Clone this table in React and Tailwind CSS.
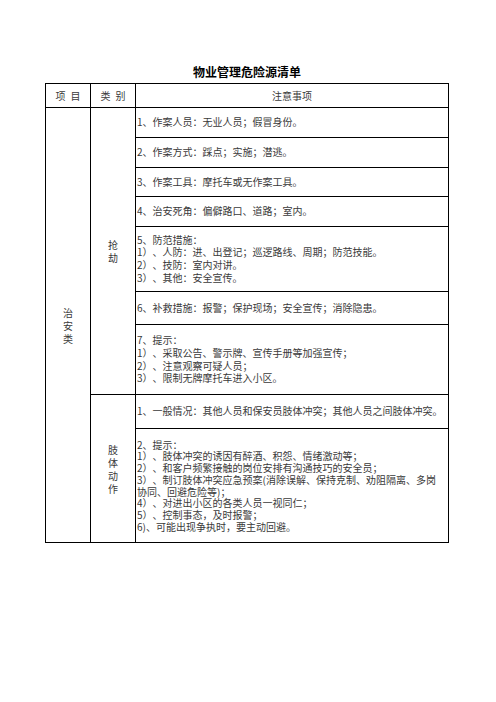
import React from "react";

const robbery = [
  { h: "h-[30px]", lines: ["1、作案人员：无业人员；假冒身份。"] },
  { h: "h-[30px]", lines: ["2、作案方式：踩点；实施；潜逃。"] },
  { h: "h-[29px]", lines: ["3、作案工具：摩托车或无作案工具。"] },
  { h: "h-[30px]", lines: ["4、治安死角：偏僻路口、道路；室内。"] },
  {
    h: "h-[65px]",
    lines: [
      "5、防范措施：",
      "1）、人防：进、出登记；巡逻路线、周期；防范技能。",
      "2）、技防：室内对讲。",
      "3）、其他：安全宣传。",
    ],
  },
  { h: "h-[33px]", lines: ["6、补救措施：报警；保护现场；安全宣传；消除隐患。"] },
  {
    h: "h-[70px]",
    lines: [
      "7、提示：",
      "1）、采取公告、警示牌、宣传手册等加强宣传；",
      "2）、注意观察可疑人员；",
      "3）、限制无牌摩托车进入小区。",
    ],
  },
];

const fight = [
  { h: "h-[34px]", lines: ["1、一般情况：其他人员和保安员肢体冲突；其他人员之间肢体冲突。"] },
  {
    h: "h-[114px]",
    tight: true,
    lines: [
      "2、提示：",
      "1）、肢体冲突的诱因有醉酒、积怨、情绪激动等；",
      "2）、和客户频繁接触的岗位安排有沟通技巧的安全员；",
      "3）、制订肢体冲突应急预案(消除误解、保持克制、劝阻隔离、多岗",
      "协同、回避危险等)；",
      "4）、对进出小区的各类人员一视同仁；",
      "5）、控制事态，及时报警；",
      "6)、可能出现争执时，要主动回避。",
    ],
  },
];

function Rows({ rows }) {
  return (
    <div className="flex flex-col">
      {rows.map((r, i) => (
        <div
          key={i}
          className={`${r.h} border-r border-b border-black flex flex-col justify-center pl-[1px] ${
            r.tight ? "leading-[11.7px]" : "leading-[12.6px]"
          }`}
        >
          {r.lines.map((l, j) => (
            <div key={j} className="whitespace-nowrap">
              {l}
            </div>
          ))}
        </div>
      ))}
    </div>
  );
}

function Vertical({ text }) {
  return (
    <div className="flex flex-col items-center leading-[13px]">
      {text.split("").map((c, i) => (
        <span key={i}>{c}</span>
      ))}
    </div>
  );
}

export default function App() {
  return (
    <div
      className="min-h-screen bg-white text-[#3a3a3a] text-[10px] [text-spacing-trim:space-all]"
      style={{ fontFamily: '"Noto Sans CJK SC", "Liberation Sans", sans-serif' }}
    >
      <div className="pl-[45px] pt-[64px]">
        <div className="w-[404px]">
          <div className="h-[19px] text-center text-[12px] font-bold leading-[16px] text-black">
            物业管理危险源清单
          </div>
          <div className="border-l border-t border-black">
            <div className="flex h-[24px]">
              <div className="w-[45px] border-r border-b border-black flex items-center justify-center">
                <span>项</span>
                <span className="ml-[5px]">目</span>
              </div>
              <div className="w-[45px] border-r border-b border-black flex items-center justify-center">
                <span>类</span>
                <span className="ml-[5px]">别</span>
              </div>
              <div className="w-[313px] border-r border-b border-black flex items-center justify-center">
                注意事项
              </div>
            </div>
            <div className="flex">
              <div className="w-[45px] border-r border-b border-black flex items-center justify-center">
                <Vertical text="治安类" />
              </div>
              <div className="flex flex-col">
                <div className="flex">
                  <div className="w-[45px] border-r border-b border-black flex items-center justify-center">
                    <Vertical text="抢劫" />
                  </div>
                  <div className="w-[313px]">
                    <Rows rows={robbery} />
                  </div>
                </div>
                <div className="flex">
                  <div className="w-[45px] border-r border-b border-black flex items-center justify-center">
                    <Vertical text="肢体动作" />
                  </div>
                  <div className="w-[313px]">
                    <Rows rows={fight} />
                  </div>
                </div>
              </div>
            </div>
          </div>
        </div>
      </div>
    </div>
  );
}
